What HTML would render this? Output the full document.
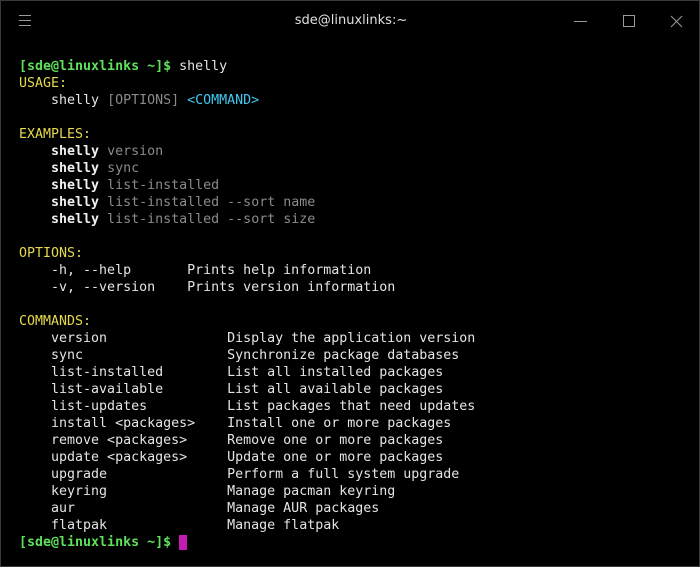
<!DOCTYPE html>
<html><head><meta charset="utf-8"><style>
html,body{margin:0;padding:0;background:#000;}
#w{position:relative;width:698px;height:565px;border:1px solid #3a3a3a;background:#000;overflow:hidden;}
#t{position:absolute;top:12px;left:1px;width:698px;text-align:center;color:#e0e0e0;font:13px "DejaVu Sans","Liberation Sans",sans-serif;}
pre{position:absolute;left:18px;top:57px;margin:0;font:13.3px/17px "DejaVu Sans Mono","Liberation Mono",monospace;color:#e4e4e4;}
.g{color:#5fe05a;font-weight:bold}.y{color:#e6d94e}.d{color:#8a8a8a}.c{color:#44c8f2}.b{font-weight:bold;color:#f0f0f0}
.cur{background:#c41bb4;color:#c41bb4}
</style></head><body><div id="w">
<svg style="position:absolute;left:0;top:0" width="698" height="40">
<g stroke="#9a9a9a" stroke-width="1"><line x1="18" y1="14.5" x2="30" y2="14.5"/><line x1="18" y1="19.5" x2="30" y2="19.5"/><line x1="18" y1="24.5" x2="30" y2="24.5"/>
<line x1="573" y1="20.5" x2="586" y2="20.5"/><rect x="622.5" y="14.5" width="11" height="11" fill="none"/>
<line x1="670" y1="15" x2="681" y2="26"/><line x1="681" y1="15" x2="670" y2="26"/></g></svg>
<div id="t">sde@linuxlinks:~</div>
<pre><span class="g">[sde@linuxlinks ~]$</span> shelly
<span class="y">USAGE:</span>
    shelly <span class="d">[OPTIONS]</span> <span class="c">&lt;COMMAND&gt;</span>

<span class="y">EXAMPLES:</span>
    <span class="b">shelly</span> <span class="d">version</span>
    <span class="b">shelly</span> <span class="d">sync</span>
    <span class="b">shelly</span> <span class="d">list-installed</span>
    <span class="b">shelly</span> <span class="d">list-installed --sort name</span>
    <span class="b">shelly</span> <span class="d">list-installed --sort size</span>

<span class="y">OPTIONS:</span>
    -h, --help       Prints help information
    -v, --version    Prints version information

<span class="y">COMMANDS:</span>
    version               Display the application version
    sync                  Synchronize package databases
    list-installed        List all installed packages
    list-available        List all available packages
    list-updates          List packages that need updates
    install &lt;packages&gt;    Install one or more packages
    remove &lt;packages&gt;     Remove one or more packages
    update &lt;packages&gt;     Update one or more packages
    upgrade               Perform a full system upgrade
    keyring               Manage pacman keyring
    aur                   Manage AUR packages
    flatpak               Manage flatpak
<span class="g">[sde@linuxlinks ~]$</span> <span class="cur">_</span></pre>
</div></body></html>
